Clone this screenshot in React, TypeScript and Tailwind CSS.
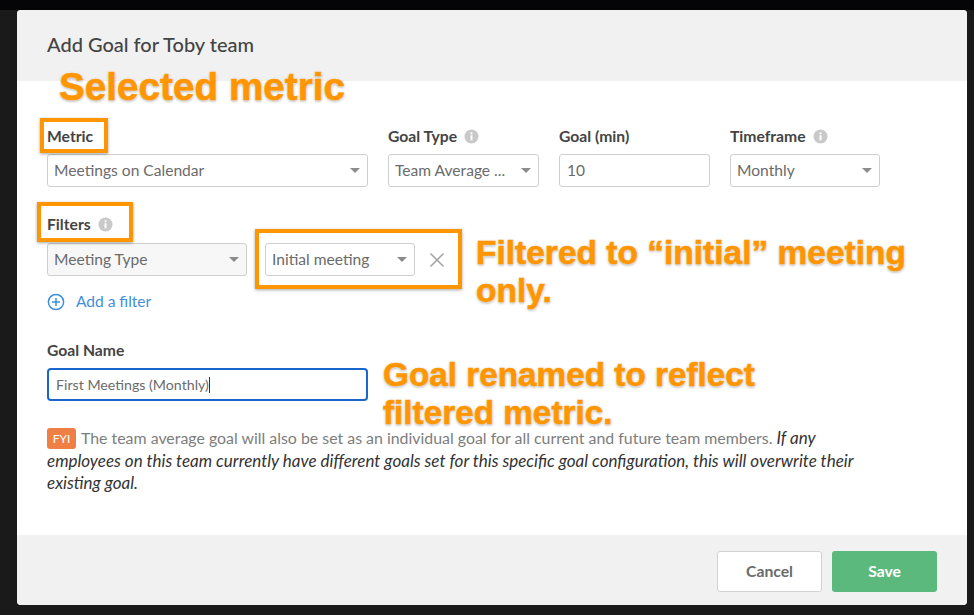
import React from "react";

const Info = () => (
  <svg width="15" height="15" viewBox="0 0 15 15" className="shrink-0">
    <circle cx="7.5" cy="7.5" r="7" fill="#c9c9c9" />
    <circle cx="7.5" cy="4.3" r="1.1" fill="#fff" />
    <rect x="6.5" y="6.3" width="2" height="5" fill="#fff" />
  </svg>
);

const Caret = () => <span className="w-0 h-0 border-l-[5px] border-r-[5px] border-t-[5px] border-l-transparent border-r-transparent border-t-[#8c8c8c] shrink-0" />;

function Select({ text, className = "" }: { text: string; className?: string }) {
  return (
    <div className={`h-[33px] flex items-center justify-between pl-[6px] pr-[7px] border border-[#cfcfcf] rounded-[3px] text-[15.6px] text-[#6b6b6b] ${className}`}>
      <span className="whitespace-nowrap">{text}</span>
      <Caret />
    </div>
  );
}

function Label({ text, info }: { text: string; info?: boolean }) {
  return (
    <div className="h-[19px] flex items-center gap-[7px] text-[15.7px] font-bold text-[#444]">
      {text}
      {info && <Info />}
    </div>
  );
}

const calloutText = "absolute font-bold text-[#ff9500] [-webkit-text-stroke:0.6px_#ff9500] [text-shadow:0_0_2px_#fff,0_0_2px_#fff,0_1px_3px_rgba(0,0,0,0.45)] font-['Liberation_Sans',sans-serif]";
const frame = "absolute border-[4px] border-[#ff9500] shadow-[0_1px_3px_rgba(0,0,0,0.35)]";

export default function App() {
  return (
    <div className="relative h-[615px] w-full overflow-hidden bg-[#1a1a1a] font-['Lato',sans-serif]">
      <div className="h-[10px] bg-[#050507]" />
      <div className="ml-[17px] w-[950px] h-[595px] rounded-[4px] overflow-hidden bg-white flex flex-col">
        <div className="h-[71px] shrink-0 bg-[#f1f1f1] pl-[30px] pt-[22px] text-[20px] leading-[24px] font-medium text-[#444]">
          Add Goal for Toby team
        </div>

        <div className="flex-1 pl-[30px] pr-[30px] pt-[46px]">
          <div className="flex gap-[20px]">
            <div className="w-[321px]">
              <Label text="Metric" />
              <Select text="Meetings on Calendar" className="mt-[8px]" />
            </div>
            <div className="w-[151px]">
              <Label text="Goal Type" info />
              <Select text="Team Average ..." className="mt-[8px]" />
            </div>
            <div className="w-[151px]">
              <Label text="Goal (min)" />
              <div className="mt-[8px] h-[33px] flex items-center pl-[7px] border border-[#cfcfcf] rounded-[3px] text-[15.5px] text-[#6b6b6b]">10</div>
            </div>
            <div className="w-[150px]">
              <Label text="Timeframe" info />
              <Select text="Monthly" className="mt-[8px]" />
            </div>
          </div>

          <div className="mt-[28px]">
            <Label text="Filters" info />
          </div>
          <div className="mt-[9px] flex items-center">
            <Select text="Meeting Type" className="w-[200px] bg-[#f7f7f7]" />
            <Select text="Initial meeting" className="ml-[18px] w-[150px]" />
            <svg width="16" height="16" viewBox="0 0 16 16" className="ml-[14px]">
              <path d="M1.5 1.5 L14.5 14.5 M14.5 1.5 L1.5 14.5" stroke="#a3a3a3" strokeWidth="1.5" />
            </svg>
          </div>

          <div className="mt-[17px] flex items-center gap-[11px] h-[18px] text-[15.5px] text-[#3f8fdc]">
            <svg width="18" height="18" viewBox="0 0 18 18">
              <circle cx="9" cy="9" r="7.6" fill="none" stroke="#3f8fdc" strokeWidth="1.5" />
              <path d="M9 5v8M5 9h8" stroke="#3f8fdc" strokeWidth="1.5" />
            </svg>
            Add a filter
          </div>

          <div className="mt-[30px]">
            <Label text="Goal Name" />
          </div>
          <div className="mt-[8px] w-[321px] h-[33px] flex items-center pl-[7px] border-2 border-[#1a66cc] rounded-[4px] text-[14.2px] text-[#6b6b6b]">
            First Meetings (Monthly)
            <span className="w-px h-[16px] bg-[#333]" />
          </div>

          <div className="mt-[26px] w-[830px] text-[15.9px] leading-[22.5px] text-[#7d7d7d]">
            <span className="inline-block align-[1px] h-[21px] w-[29px] mr-[5px] rounded-[3px] bg-[#ee7f45] text-center text-[12px] leading-[21px] text-white">FYI</span>
            The team average goal will also be set as an individual goal for all current and future team members.{" "}
            <em className="text-[17px] text-[#333]">If any employees on this team currently have different goals set for this specific goal configuration, this will overwrite their existing goal.</em>
          </div>
        </div>

        <div className="h-[70px] shrink-0 bg-[#f1f1f1] flex justify-end items-start gap-[10px] pt-[16px] pr-[30px]">
          <button className="w-[105px] h-[41px] rounded-[3px] border border-[#d2d2d2] bg-white text-[15.7px] font-bold text-[#6b6b6b]">Cancel</button>
          <button className="w-[105px] h-[41px] rounded-[3px] bg-[#5cb97d] text-[15.7px] font-bold text-white">Save</button>
        </div>
      </div>

      <div className={`${frame} left-[40px] top-[118px] w-[68px] h-[35px]`} />
      <div className={`${frame} left-[37px] top-[202px] w-[96px] h-[40px]`} />
      <div className={`${frame} left-[255px] top-[229px] w-[207px] h-[60px]`} />

      <div className={`${calloutText} left-[59px] top-[65px] text-[38.7px] leading-[44px] whitespace-nowrap`}>Selected metric</div>
      <div className={`${calloutText} left-[476px] top-[234px] w-[450px] text-[33.5px] leading-[38px]`}>Filtered to “initial” meeting only.</div>
      <div className={`${calloutText} left-[383px] top-[356px] w-[400px] text-[33.3px] leading-[38px]`}>Goal renamed to reflect filtered metric.</div>
    </div>
  );
}
